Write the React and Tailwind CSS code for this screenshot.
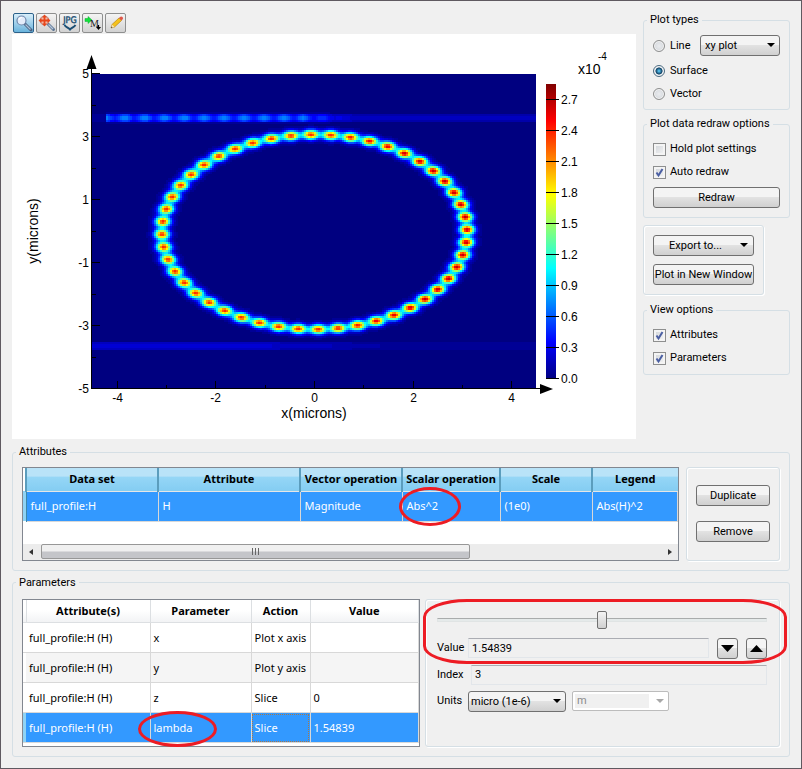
import React from "react";

/* ---------- heat map ---------- */

const CELL = 2;
const MAP = { x: 80, y: 40, w: 444, h: 314 };
const LEVELS = 48;

function jet(v) {
  const ch = (c) => Math.round(255 * Math.max(0, Math.min(1, 1.5 - Math.abs(4 * v - c))));
  return `rgb(${ch(3)},${ch(2)},${ch(1)})`;
}

function smooth(a, b, x) {
  const t = Math.max(0, Math.min(1, (x - a) / (b - a)));
  return t * t * (3 - 2 * t);
}

function field(px, py) {
  const x = (px - 302.5) / 49.2;
  const y = (198 - py) / 31.4;
  const r = Math.hypot(x, y);
  const angle = Math.atan2(x, y);
  const beat = Math.pow(Math.cos(24 * (angle + 0.024)), 2);
  const peak = 0.48 + 0.1 * smooth(0, 2.5, x);
  const ring = (0.36 + peak * beat) * Math.exp(-Math.pow((r - 3.1) / 0.15, 2));

  const topBeat = Math.pow(Math.cos((Math.PI * (px - 132.5)) / 19.9), 2);
  const topLevel = px < 94 ? 0.02 : 0.07 + (0.08 + 0.11 * topBeat) * (1 - smooth(280, 345, px));
  const top = topLevel * Math.exp(-Math.pow((py - 84) / 4, 4));

  const bottomLevel = 0.075 - 0.055 * smooth(240, 420, px);
  const bottom = bottomLevel * Math.exp(-Math.pow((py - 312) / 4, 4));
  return Math.min(0.98, ring + top + bottom);
}

const heatPaths = (() => {
  const groups = {};
  for (let y = 0; y < MAP.h; y += CELL) {
    let start = 0;
    let last = -1;
    for (let x = 0; x <= MAP.w; x += CELL) {
      const lvl =
        x < MAP.w
          ? Math.round(field(MAP.x + x + CELL / 2, MAP.y + y + CELL / 2) * LEVELS)
          : -1;
      if (lvl !== last) {
        if (last > 0) {
          groups[last] =
            (groups[last] || "") +
            `M${MAP.x + start} ${MAP.y + y}h${x - start}v${CELL}h${start - x}z`;
        }
        start = x;
        last = lvl;
      }
    }
  }
  return Object.entries(groups).map(([lvl, d]) => ({ d, fill: jet(lvl / LEVELS) }));
})();

const yTicks = [5, 3, 1, -1, -3, -5];
const xTicks = [-4, -2, 0, 2, 4];
const scaleTicks = ["0.0", "0.3", "0.6", "0.9", "1.2", "1.5", "1.8", "2.1", "2.4", "2.7"];
const px = (v) => Math.round(302 + v * 49.3) + 0.5;
const py = (v) => Math.round(196.6 - v * 31.5) + 0.5;

function Plot() {
  return (
    <svg
      viewBox="0 0 624 405"
      className="block h-auto w-full bg-white"
      fontFamily='"Liberation Sans", Arial, sans-serif'
      fontSize="12"
      role="img"
      aria-label="Surface plot of field intensity"
    >
      <defs>
        <linearGradient id="jet" x1="0" y1="1" x2="0" y2="0">
          <stop offset="0" stopColor="#000080" />
          <stop offset="0.125" stopColor="#0000ff" />
          <stop offset="0.375" stopColor="#00ffff" />
          <stop offset="0.625" stopColor="#ffff00" />
          <stop offset="0.875" stopColor="#ff0000" />
          <stop offset="1" stopColor="#800000" />
        </linearGradient>
      </defs>

      <g shapeRendering="crispEdges">
        <rect x={MAP.x} y={MAP.y} width={MAP.w} height={MAP.h + 1} fill="#000080" />
        {heatPaths.map((p) => (
          <path key={p.fill} d={p.d} fill={p.fill} />
        ))}
        <rect x="534" y="50" width="10" height="295" fill="url(#jet)" />
      </g>

      <g stroke="#000" strokeWidth="1" shapeRendering="crispEdges">
        <path d="M79.500 34V355M79 354.500H530" />
        {yTicks.map((v) => (
          <path key={v} d={`M80 ${py(v)}h8${v > -5 ? `M80 ${py(v - 1)}h4` : ""}`} />
        ))}
        {xTicks.map((v) => (
          <path key={v} d={`M${px(v)} 354v-7${v < 4 ? `M${px(v + 1)} 354v-3` : ""}`} />
        ))}
        {scaleTicks.map((t, i) => (
          <path key={t} d={`M534 ${344.5 - i * 31}h13`} />
        ))}
      </g>
      <path d="M79.500 21L84.500 35H74.500Z" />
      <path d="M541 355L528 360V350Z" />

      {yTicks.map((v) => (
        <text key={v} x="77" y={py(v) + 4} textAnchor="end">
          {v}
        </text>
      ))}
      {xTicks.map((v) => (
        <text key={v} x={px(v)} y="368" textAnchor="middle">
          {v}
        </text>
      ))}
      {scaleTicks.map((t, i) => (
        <text key={t} x="549" y={349 - i * 31}>
          {t}
        </text>
      ))}
      <text x="566" y="40" fontSize="14">
        x10
      </text>
      <text x="586" y="26" fontSize="10">
        -4
      </text>
      <text x="302" y="384" fontSize="14" textAnchor="middle">
        x(microns)
      </text>
      <text x="26" y="197" fontSize="14" textAnchor="middle" transform="rotate(-90 26 197)">
        y(microns)
      </text>
    </svg>
  );
}

/* ---------- toolbar ---------- */

function ToolButton({ label, active, children }) {
  return (
    <button
      type="button"
      aria-label={label}
      className={`flex h-5 w-[21px] items-center justify-center rounded-xs border ${
        active
          ? "border-[#2c628b] bg-linear-to-b from-[#d8eefa] to-[#68b3dc]"
          : "border-[#8e8f8f] bg-linear-to-b from-[#f4f4f4] to-[#d2d2d2]"
      }`}
    >
      <svg viewBox="0 0 18 18" className="h-[18px] w-[18px]">
        {children}
      </svg>
    </button>
  );
}

function Toolbar() {
  return (
    <div className="flex gap-[2px] pl-px">
      <ToolButton label="Zoom" active>
        <path d="M10 10L16 16" stroke="#4a6080" strokeWidth="3" strokeLinecap="round" />
        <path d="M10.500 10.500L15.500 15.500" stroke="#a9c0d8" strokeWidth="1.200" />
        <circle cx="6.500" cy="6.500" r="4.500" fill="#e4ecfa" stroke="#7088ac" strokeWidth="1.200" />
        <path d="M4 6a3 3 0 0 1 3-2.500" stroke="#fff" strokeWidth="1.200" fill="none" />
      </ToolButton>
      <ToolButton label="Zoom extent">
        <path d="M10 10L15.500 15.500" stroke="#5f7795" strokeWidth="3" strokeLinecap="round" />
        <path d="M10.500 10.500L15 15" stroke="#b5c6da" strokeWidth="1.200" />
        <circle cx="6.500" cy="6.500" r="4.500" fill="#f0b9a8" stroke="#b9837c" />
        <path d="M6.500 2.500V10.500M2.500 6.500H10.500" stroke="#e8471c" strokeWidth="1.800" />
        <path d="M6.500 .5l2.500 3h-5zM6.500 12.500l2.500-3h-5zM.5 6.500l3-2.500v5zM12.500 6.500l-3-2.500v5z" fill="#e8471c" />
      </ToolButton>
      <ToolButton label="Export JPG">
        <text
          x="9"
          y="9"
          textAnchor="middle"
          fontFamily='"DejaVu Sans Condensed", "Liberation Sans", sans-serif'
          fontSize="9"
          fill="#1c4f74"
          stroke="#1c4f74"
          strokeWidth="0.400"
          textRendering="geometricPrecision"
        >
          JPG
        </text>
        <path d="M3.500 11C5 13.500 7 13.500 9 15.500C11 13.500 13 13.500 14.500 11" stroke="#1c4f74" strokeWidth="2" fill="none" />
      </ToolButton>
      <ToolButton label="Marker">
        <path d="M1 4.500h3V2.500L8 6L4 9.500V7.500H1z" fill="#12e23c" stroke="#0fae30" strokeWidth="0.500" />
        <text x="6" y="13" fontFamily='"Liberation Serif", serif' fontSize="10" fill="#222">
          M
        </text>
        <path d="M14.500 11v3" stroke="#000" strokeWidth="1.200" />
        <path d="M12 13h5l-2.500 3z" />
      </ToolButton>
      <ToolButton label="Edit">
        <path d="M4 14L5 10.500L12 4L14.500 6.500L7.500 13Z" fill="#f5c21c" stroke="#b98410" strokeWidth="0.700" />
        <path d="M12 4L13 3a1.700 1.700 0 0 1 2.500 2.500L14.500 6.500Z" fill="#e0564a" />
        <path d="M4 14L5 10.500L7.500 13Z" fill="#f7e2bb" />
        <path d="M4 14l.4-1.600 1.200 1.200z" fill="#333" />
      </ToolButton>
    </div>
  );
}

/* ---------- controls ---------- */

const GROUP = "rounded-[3px] border border-[#d5dfe5] shadow-[inset_1px_1px_0_#fff,1px_1px_0_#fff]";
const BUTTON =
  "h-[21px] rounded-[3px] border border-[#707070] bg-linear-to-b from-[#f4f4f4] from-45% via-[#e2e2e2] via-50% to-[#d0d0d0] text-center leading-[19px] whitespace-nowrap";

function Caret({ className }) {
  return (
    <svg viewBox="0 0 8 4" className={`pointer-events-none h-1 w-2 ${className}`}>
      <path d="M0 0H8L4 4Z" fill="currentColor" />
    </svg>
  );
}

function Group({ title, className, children }) {
  return (
    <fieldset className={`min-w-0 rounded-[3px] border border-[#d5dfe5] px-[9px] ${className}`}>
      <legend className="-ml-[6px] px-[3px] leading-[14px] whitespace-nowrap">{title}</legend>
      {children}
    </fieldset>
  );
}

function Radio({ label, checked }) {
  return (
    <label className="flex items-center gap-[5px]">
      <input
        type="radio"
        name="plot-type"
        defaultChecked={checked}
        className="h-3 w-3 appearance-none rounded-full border border-[#8e8f8f] bg-radial from-[#e9ebee] to-[#cfd3d8] shadow-[inset_0_0_0_1px_#f4f4f4] checked:border-[#4b6a80] checked:from-[#4fb4e0] checked:from-10% checked:via-[#0f3e60] checked:via-45% checked:to-[#e8eef2] checked:to-55%"
      />
      {label}
    </label>
  );
}

function Check({ label, checked }) {
  return (
    <label className="flex items-center gap-1">
      <span className="relative flex h-[13px] w-[13px]">
        <input
          type="checkbox"
          defaultChecked={checked}
          className="peer h-[13px] w-[13px] appearance-none border border-[#8e8f8f] bg-linear-to-br from-[#cfd3d8] to-[#f6f6f6] shadow-[inset_0_0_0_2px_#f4f4f4]"
        />
        <svg
          viewBox="0 0 13 13"
          className="pointer-events-none absolute inset-0 hidden h-[13px] w-[13px] peer-checked:block"
        >
          <path d="M3.500 6.500L5.500 9.500L9.500 3" stroke="#4b5fa3" strokeWidth="2" fill="none" />
        </svg>
      </span>
      {label}
    </label>
  );
}

function SidePanel() {
  return (
    <aside className="mt-3 flex w-[147px] shrink-0 flex-col">
      <Group title="Plot types" className="pb-2">
        <div className="mt-2 flex items-center justify-between">
          <Radio label="Line" />
          <span className="relative flex">
            <select aria-label="Line plot kind" className={`${BUTTON} w-20 appearance-none pl-1 text-left`}>
              <option>xy plot</option>
            </select>
            <Caret className="absolute top-2 right-[5px]" />
          </span>
        </div>
        <div className="mt-2 flex flex-col gap-[9px] leading-[14px]">
          <Radio label="Surface" checked />
          <Radio label="Vector" />
        </div>
      </Group>

      <Group title="Plot data redraw options" className="mt-[7px] pb-[9px]">
        <div className="mt-[11px] flex flex-col gap-[9px] leading-[14px]">
          <Check label="Hold plot settings" />
          <Check label="Auto redraw" checked />
        </div>
        <button type="button" className={`${BUTTON} mt-2 w-full`}>
          Redraw
        </button>
      </Group>

      <div className={`mt-[7px] flex w-[121px] flex-col gap-2 p-[9px] ${GROUP}`}>
        <button type="button" className={`${BUTTON} relative w-[101px] pr-4`}>
          Export to...
          <Caret className="absolute top-[7px] right-[5px]" />
        </button>
        <button type="button" className={`${BUTTON} w-[101px]`}>
          Plot in New Window
        </button>
      </div>

      <Group title="View options" className="mt-2 pb-[9px]">
        <div className="mt-[11px] flex flex-col gap-[9px] leading-[14px]">
          <Check label="Attributes" checked />
          <Check label="Parameters" checked />
        </div>
      </Group>
    </aside>
  );
}

/* ---------- attributes ---------- */

const attributeColumns = [
  { head: "Data set", value: "full_profile:H" },
  { head: "Attribute", value: "H" },
  { head: "Vector operation", value: "Magnitude" },
  { head: "Scalar operation", value: "Abs^2", marked: true },
  { head: "Scale", value: "(1e0)" },
  { head: "Legend", value: "Abs(H)^2" },
];

function Attributes() {
  return (
    <Group title="Attributes" className="pb-[9px]">
      <div className="flex gap-[7px] pt-2">
        <div className="min-w-0 flex-1 border border-[#828790] bg-white">
          <table className="w-full table-fixed border-collapse font-['Noto_Sans',sans-serif]">
            <colgroup>
              <col className="w-[3px]" />
              <col className="w-[132px]" />
              <col className="w-[142px]" />
              <col className="w-[102px]" />
              <col className="w-[98px]" />
              <col className="w-[92px]" />
              <col />
            </colgroup>
            <thead>
              <tr className="h-[23px]">
                <td />
                {attributeColumns.map((c) => (
                  <th
                    key={c.head}
                    className="border-b border-l-2 border-b-[#e6e6e6] border-l-[#5b9dbd] bg-linear-to-b from-[#b9e3f8] from-35% via-[#95d6f6] via-40% to-[#84cdf2] p-0 font-bold whitespace-nowrap"
                  >
                    {c.head}
                  </th>
                ))}
              </tr>
            </thead>
            <tbody>
              <tr className="h-[30px] text-white">
                <td className="border-r border-[#3b88ab] bg-[#8fd3f5]" />
                {attributeColumns.map((c) => (
                  <td key={c.head} className="relative border-r border-b border-[#d8d8d8] bg-[#3399ff] py-0 pr-0 pl-1">
                    {c.value}
                    {c.marked && (
                      <span className="pointer-events-none absolute -top-[5px] -left-1 h-[39px] w-[62px] rounded-[50%] border-3 border-[#ed1c24]" />
                    )}
                  </td>
                ))}
              </tr>
            </tbody>
          </table>
          <div className="mt-[22px] flex h-4 items-center bg-[#ececec]">
            <svg viewBox="0 0 18 16" className="h-4 w-[18px]">
              <path d="M10 5V11L6 8Z" fill="#333" />
            </svg>
            <div className="flex h-[15px] w-[429px] items-center justify-center gap-px rounded-xs border border-[#979797] bg-linear-to-b from-[#f0f0f0] from-45% to-[#c4c5c9] to-55%">
              <span className="h-[7px] w-[2px] border-l border-[#666]" />
              <span className="h-[7px] w-[2px] border-l border-[#666]" />
              <span className="h-[7px] w-[2px] border-l border-[#666]" />
            </div>
            <svg viewBox="0 0 18 16" className="ml-auto h-4 w-[18px]">
              <path d="M8 5V11L12 8Z" fill="#333" />
            </svg>
          </div>
        </div>
        <div className={`flex w-[94px] shrink-0 flex-col gap-[15px] px-[9px] pt-[17px] ${GROUP}`}>
          <button type="button" className={BUTTON}>
            Duplicate
          </button>
          <button type="button" className={BUTTON}>
            Remove
          </button>
        </div>
      </div>
    </Group>
  );
}

/* ---------- parameters ---------- */

const parameterRows = [
  { parameter: "x", action: "Plot x axis", value: "" },
  { parameter: "y", action: "Plot y axis", value: "" },
  { parameter: "z", action: "Slice", value: "0" },
  { parameter: "lambda", action: "Slice", value: "1.54839", selected: true },
];

function ParameterTable() {
  const cell = "border-r border-b border-[#d8d8d8] py-0 pr-0 pl-[3px] whitespace-nowrap";
  return (
    <div className="w-[398px] shrink-0 border border-[#828790] bg-white pb-[3px]">
      <table className="w-full table-fixed border-collapse font-['Noto_Sans',sans-serif]">
        <colgroup>
          <col className="w-[3px]" />
          <col className="w-[124px]" />
          <col className="w-[101px]" />
          <col className="w-[59px]" />
          <col />
        </colgroup>
        <thead>
          <tr className="h-[23px] bg-linear-to-b from-white from-45% to-[#f1f2f4]">
            <td className="border-r border-b border-[#dcdfe2]" />
            {["Attribute(s)", "Parameter", "Action", "Value"].map((h) => (
              <th key={h} className="border-r border-b border-[#dcdfe2] p-0 font-bold">
                {h}
              </th>
            ))}
          </tr>
        </thead>
        <tbody>
          {parameterRows.map((r) => (
            <tr
              key={r.parameter}
              className={r.selected ? "h-[30px] bg-[#3399ff] text-white" : "h-[30px] even:bg-[#f5f5f5]"}
            >
              <td className={`border-b border-[#d8d8d8] ${r.selected ? "bg-[#8fd3f5]" : "bg-white"}`} />
              <td className={cell}>full_profile:H (H)</td>
              <td className={`relative ${cell}`}>
                {r.parameter}
                {r.selected && (
                  <span className="pointer-events-none absolute -top-[2px] -left-[13px] h-9 w-[79px] rounded-[50%] border-3 border-[#ed1c24]" />
                )}
              </td>
              <td className={`${cell} ${r.selected ? "outline-1 outline-dotted -outline-offset-2 outline-[#a87848]" : ""}`}>
                {r.action}
              </td>
              <td className={cell}>{r.value}</td>
            </tr>
          ))}
        </tbody>
      </table>
    </div>
  );
}

const FIELD =
  "h-5 min-w-0 flex-1 border border-[#e2e6ea] border-t-[#abadb3] bg-[#f0f0f0] pl-[3px] outline-none";

function StepButton({ label, d }) {
  return (
    <button type="button" aria-label={label} className={`${BUTTON} flex w-[21px] shrink-0 items-center justify-center`}>
      <svg viewBox="0 0 13 7" className="h-[7px] w-[13px]">
        <path d={d} />
      </svg>
    </button>
  );
}

function ParameterEditor() {
  return (
    <div className={`relative min-w-0 flex-1 pt-[10px] pr-3 pl-[11px] ${GROUP}`}>
      <input
        type="range"
        aria-label="Value slider"
        min="0"
        max="10"
        defaultValue="5"
        className="block h-5 w-full appearance-none bg-transparent [&::-webkit-slider-runnable-track]:h-1 [&::-webkit-slider-runnable-track]:border [&::-webkit-slider-runnable-track]:border-[#e0e4e4] [&::-webkit-slider-runnable-track]:border-t-[#a9acac] [&::-webkit-slider-runnable-track]:bg-[#e5eaea] [&::-webkit-slider-thumb]:-mt-2 [&::-webkit-slider-thumb]:h-[18px] [&::-webkit-slider-thumb]:w-[10px] [&::-webkit-slider-thumb]:appearance-none [&::-webkit-slider-thumb]:rounded-xs [&::-webkit-slider-thumb]:border [&::-webkit-slider-thumb]:border-[#707070] [&::-webkit-slider-thumb]:bg-linear-to-b [&::-webkit-slider-thumb]:from-[#f4f4f4] [&::-webkit-slider-thumb]:to-[#d0d0d0]"
      />
      <div className="mt-2 flex items-center">
        <label htmlFor="value" className="w-[31px]">
          Value
        </label>
        <input id="value" readOnly defaultValue="1.54839" className={FIELD} />
        <div className="ml-2 flex gap-2">
          <StepButton label="Decrease value" d="M0 0H13L6.500 7Z" />
          <StepButton label="Increase value" d="M0 7H13L6.500 0Z" />
        </div>
      </div>
      <div className="mt-[6px] flex items-center">
        <label htmlFor="index" className="w-[34px]">
          Index
        </label>
        <input id="index" readOnly defaultValue="3" className={FIELD} />
      </div>
      <div className="mt-[6px] flex items-center">
        <label htmlFor="units" className="w-[31px]">
          Units
        </label>
        <span className="relative flex">
          <select id="units" className={`${BUTTON} w-[98px] appearance-none pl-[2px] text-left`}>
            <option>micro (1e-6)</option>
          </select>
          <Caret className="absolute top-2 right-[5px]" />
        </span>
        <span className="relative ml-[6px] flex">
          <select
            aria-label="Base unit"
            disabled
            className="h-5 w-[97px] appearance-none rounded-xs border border-[#bcbcbc] bg-linear-to-r from-[#f0f0f0] from-80% to-white to-80% pl-1 text-[#8a8a8a] opacity-100 shadow-[inset_0_0_0_2px_#fff]"
          >
            <option>m</option>
          </select>
          <Caret className="absolute top-2 right-[5px] text-[#a8a8a8]" />
        </span>
      </div>
      <span className="pointer-events-none absolute -top-px -right-2 -left-[3px] h-[65px] rounded-[44px/18px] border-3 border-[#ed1c24]" />
    </div>
  );
}

function Parameters() {
  return (
    <Group title="Parameters" className="pb-[9px]">
      <div className="flex gap-[5px] pt-[9px]">
        <ParameterTable />
        <ParameterEditor />
      </div>
    </Group>
  );
}

export default function App() {
  return (
    <div className="flex min-h-screen flex-col border border-[#5f5960] bg-[#f0f0f0] px-[11px] font-[Roboto,'Noto_Sans',sans-serif] text-[11px] leading-[14px] text-black">
      <div className="flex gap-[7px]">
        <main className="min-w-0 flex-1 pt-3">
          <Toolbar />
          <div className="mt-px">
            <Plot />
          </div>
        </main>
        <SidePanel />
      </div>
      <div className="mt-[6px] flex flex-col gap-[5px]">
        <Attributes />
        <Parameters />
      </div>
    </div>
  );
}
